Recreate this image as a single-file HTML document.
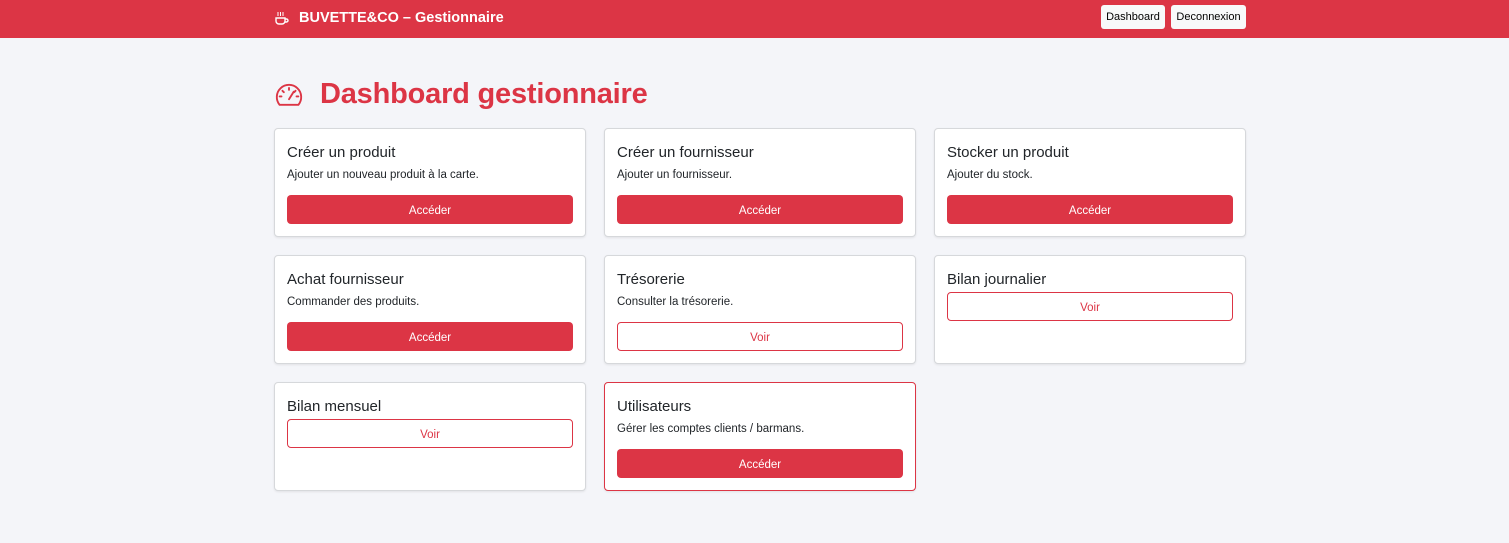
<!DOCTYPE html>
<html><head><meta charset="utf-8"><style>
*{box-sizing:border-box;margin:0;padding:0}
body{width:1509px;height:543px;background:#f4f5f9;font-family:"Liberation Sans",sans-serif;color:#212529;overflow:hidden;position:relative}
.nav{height:38px;background:#dc3545;position:relative}
.brand{position:absolute;left:274px;top:10px;color:#fff;font-weight:bold;font-size:14.5px;display:flex;align-items:center;gap:9px}
.nb{position:absolute;top:5px;height:24px;background:#f8f9fa;border-radius:3px;font-size:11px;display:flex;align-items:center;justify-content:center;color:#000}
h1{position:absolute;left:274px;top:78px;color:#dc3545;font-size:29px;font-weight:bold;display:flex;align-items:center;gap:16px;letter-spacing:-0.2px}
.card{position:absolute;width:312px;height:109px;background:#fff;border:1px solid #d6d8db;border-radius:4px;box-shadow:0 1px 2px rgba(0,0,0,.08);padding:0 12px}
.card.red{border-color:#dc3545}
.t{position:absolute;left:12px;top:15px;font-size:15px;color:#212529}
.d{position:absolute;left:12px;top:40px;font-size:11.5px}
.b{position:absolute;left:12px;right:12px;height:29px;border-radius:4px;font-size:11.5px;display:flex;align-items:center;justify-content:center;padding-top:2px}
.f{background:#dc3545;color:#fff;top:66px}
.o{border:1px solid #dc3545;color:#dc3545;background:#fff;top:36px}
.o.lo{top:66px}
</style></head><body>
<div class="nav">
<div class="brand"><svg width="16" height="16" viewBox="0 0 16 16" fill="none" stroke="#fff" stroke-width="1.4"><path d="M2 8h9v3a3 3 0 0 1-3 3H5a3 3 0 0 1-3-3z"/><path d="M11 9h1.5a1.5 1.5 0 0 1 0 3H11"/><path d="M4 2v4M6.5 2v4M9 2v4" stroke-width="1"/></svg>BUVETTE&amp;CO – Gestionnaire</div>
<div class="nb" style="left:1101px;width:64px">Dashboard</div>
<div class="nb" style="left:1171px;width:75px">Deconnexion</div>
</div>
<h1><svg width="30" height="26" viewBox="-1 -1 32 27" fill="none" stroke="#dc3545" stroke-width="2" stroke-linecap="round"><path d="M5 23A13 13 0 1 1 25 23z"/><path d="M15 17l5-8"/><path d="M15 5v2M8 8l1.5 1.5M5 14h2M22 8l-1.5 1.5M25 14h-2"/></svg>Dashboard gestionnaire</h1>

<div class="card" style="left:274px;top:128px"><div class="t">Créer un produit</div><div class="d">Ajouter un nouveau produit à la carte.</div><div class="b f">Accéder</div></div>
<div class="card" style="left:604px;top:128px"><div class="t">Créer un fournisseur</div><div class="d">Ajouter un fournisseur.</div><div class="b f">Accéder</div></div>
<div class="card" style="left:934px;top:128px"><div class="t">Stocker un produit</div><div class="d">Ajouter du stock.</div><div class="b f">Accéder</div></div>

<div class="card" style="left:274px;top:255px"><div class="t">Achat fournisseur</div><div class="d">Commander des produits.</div><div class="b f">Accéder</div></div>
<div class="card" style="left:604px;top:255px"><div class="t">Trésorerie</div><div class="d">Consulter la trésorerie.</div><div class="b o lo">Voir</div></div>
<div class="card" style="left:934px;top:255px"><div class="t">Bilan journalier</div><div class="b o">Voir</div></div>

<div class="card" style="left:274px;top:382px"><div class="t">Bilan mensuel</div><div class="b o">Voir</div></div>
<div class="card red" style="left:604px;top:382px"><div class="t">Utilisateurs</div><div class="d">Gérer les comptes clients / barmans.</div><div class="b f">Accéder</div></div>
</body></html>
